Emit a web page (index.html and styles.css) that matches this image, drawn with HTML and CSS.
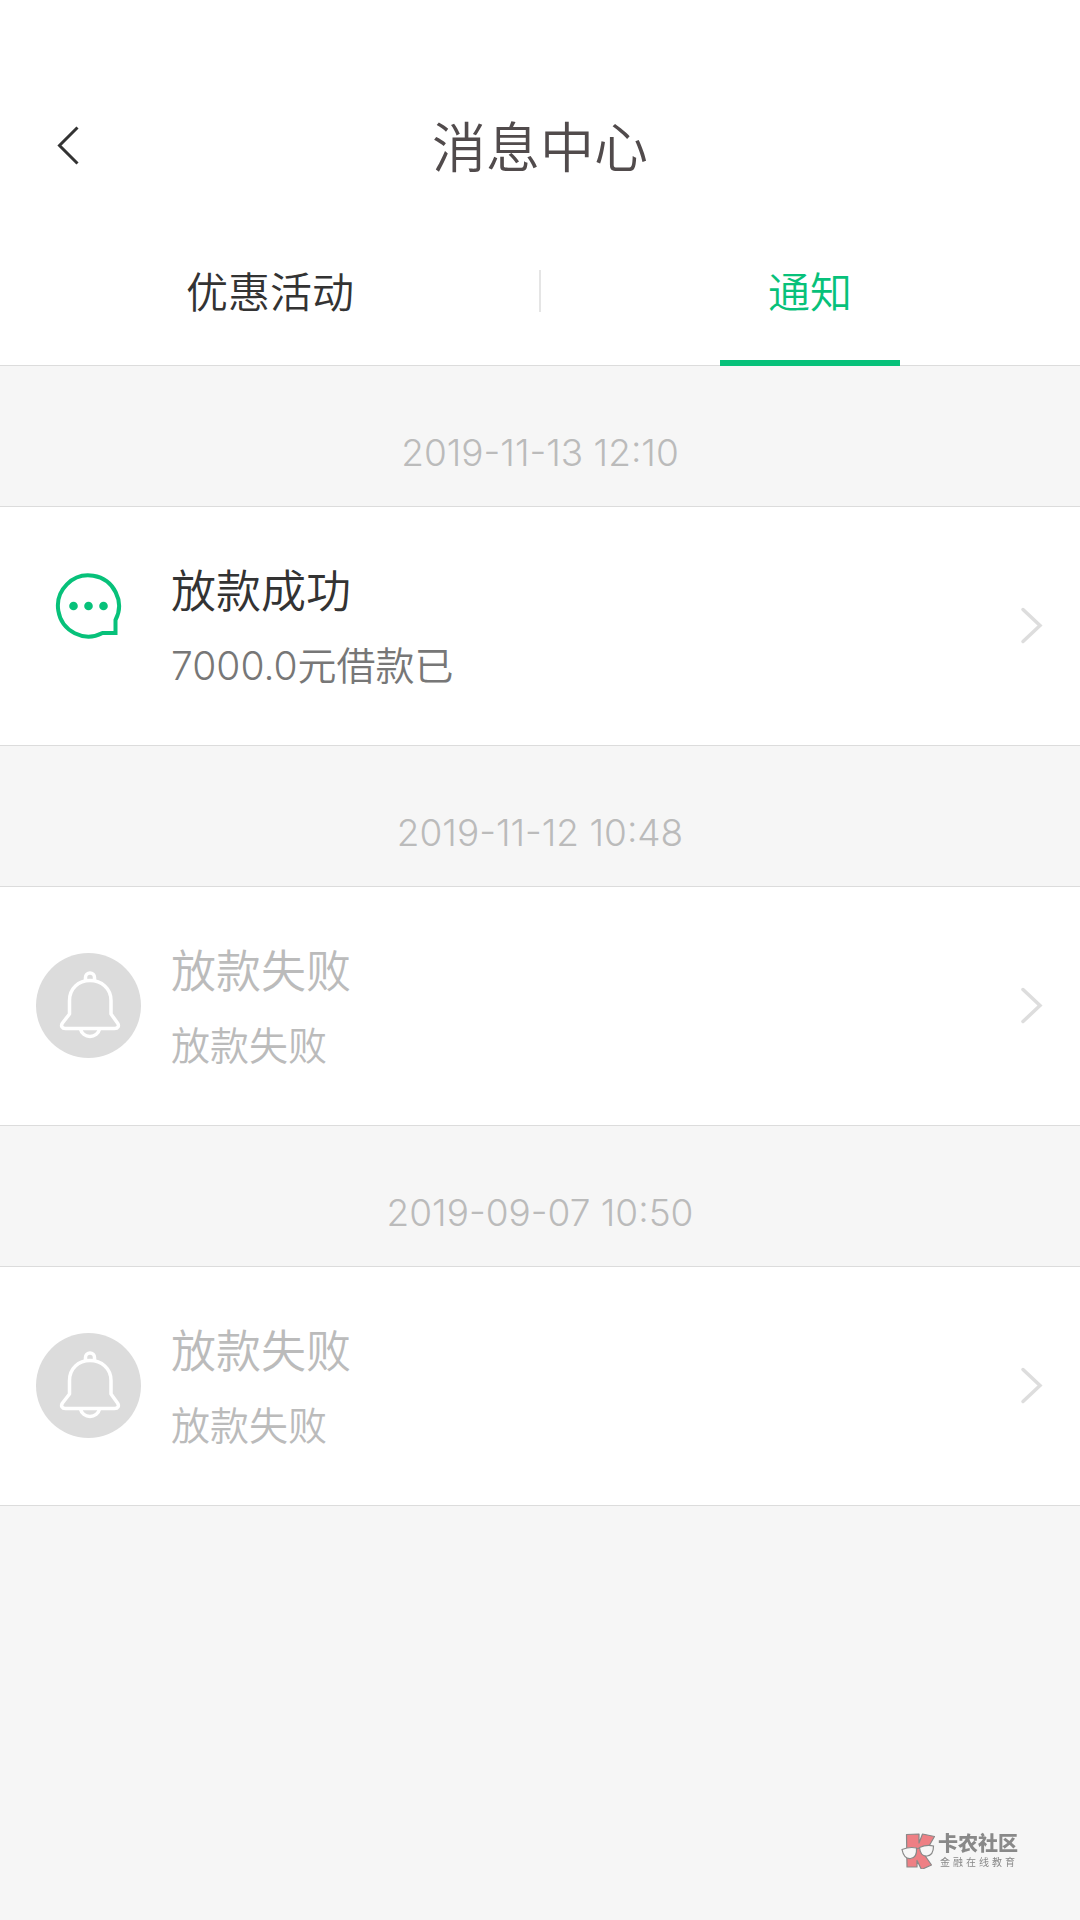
FILE: index.html
```html
<!DOCTYPE html>
<html lang="zh-CN">
<head>
<meta charset="utf-8">
<meta name="viewport" content="width=device-width, initial-scale=1">
<title>消息中心</title>
<link rel="stylesheet" href="styles.css">
</head>
<body>
<svg class="sprite" aria-hidden="true">
  <symbol id="chevron" viewBox="0 0 24 40"><path d="M3 4.500 20 20.500 3 36.500" fill="none" stroke="#ddd" stroke-width="3.500" stroke-linecap="round" stroke-linejoin="miter"/></symbol>
  <symbol id="bell" viewBox="0 0 105 105">
    <circle cx="52.5" cy="52.5" r="52.5" fill="#dcdcdc"/>
    <g fill="none" stroke="#fff" stroke-width="3.500" stroke-linejoin="round">
      <path d="M49.500 27v-2.500a4.500 4.500 0 0 1 9 0V27"/>
      <path d="M33.500 61V47.500C33.500 35.500 42.500 27.500 54 27.500s21 8 21 20V61l6.500 9c2 3 .5 5.500-3 5.500H29.500c-3.500 0-5-2.500-3-5.500z"/>
      <path d="M44.500 76c1 4.500 5 7.500 9.500 7.500s8.500-3 9.500-7.500"/>
    </g>
  </symbol>
  <symbol id="chat" viewBox="0 0 105 105">
    <path d="M66.500 60A30.500 30.500 0 1 1 79.500 47V60z" fill="none" stroke="#07c17a" stroke-width="4"/>
    <g fill="#07c17a"><circle cx="37.500" cy="33" r="4.300"/><circle cx="52.500" cy="33" r="4.300"/><circle cx="67.500" cy="33" r="4.300"/></g>
  </symbol>
</svg>

<header class="header">
  <button class="back" type="button" aria-label="返回">
    <svg class="back-icon" viewBox="0 0 24 40" aria-hidden="true"><path d="M21.500 1.500 3.500 19.500l18 18" fill="none" stroke="#333" stroke-width="3"/></svg>
  </button>
  <h1 class="title">消息中心</h1>
</header>

<nav class="tabs">
  <a class="tab" href="#offers">优惠活动</a>
  <a class="tab tab-active" href="#notices" aria-current="page">通知</a>
</nav>

<main class="list" id="notices">
  <section class="group">
    <time class="date" datetime="2019-11-13T12:10">2019-11-13 12:10</time>
    <a class="item" href="#notice-1">
      <svg class="icon" aria-hidden="true"><use href="#chat"/></svg>
      <div class="text">
        <h2 class="item-title">放款成功</h2>
        <p class="item-body"><span class="amount">7000.0</span>元借款已</p>
      </div>
      <svg class="chevron" aria-hidden="true"><use href="#chevron"/></svg>
    </a>
  </section>
  <section class="group">
    <time class="date" datetime="2019-11-12T10:48">2019-11-12 10:48</time>
    <a class="item item-read" href="#notice-2">
      <svg class="icon" aria-hidden="true"><use href="#bell"/></svg>
      <div class="text">
        <h2 class="item-title">放款失败</h2>
        <p class="item-body">放款失败</p>
      </div>
      <svg class="chevron" aria-hidden="true"><use href="#chevron"/></svg>
    </a>
  </section>
  <section class="group">
    <time class="date" datetime="2019-09-07T10:50">2019-09-07 10:50</time>
    <a class="item item-read" href="#notice-3">
      <svg class="icon" aria-hidden="true"><use href="#bell"/></svg>
      <div class="text">
        <h2 class="item-title">放款失败</h2>
        <p class="item-body">放款失败</p>
      </div>
      <svg class="chevron" aria-hidden="true"><use href="#chevron"/></svg>
    </a>
  </section>
</main>

<aside class="brand">
  <svg class="brand-logo" viewBox="0 0 34 36" aria-hidden="true">
    <path d="M5.500 1.500 18 1v9l3.500-9 12 2.500-7.500 13-3.500 4 8 11.500-10 4.500-4.500-9v6.500H6z" fill="#ee7f84" stroke="#898989" stroke-width="1.200" stroke-linejoin="round"/>
    <g fill="#f7f7f7" stroke="#898989" stroke-width="1.200">
      <path d="M1 16.500c5-2 10-2.500 14.500-1.500.5 6-1 10-6 10.500S2 21.500 1 16.500z"/>
      <path d="M18.500 14.500c4.500-2 9.500-2.500 14-1.500 0 6-1.500 9.500-6.500 10s-7-3.500-7.500-8.500z"/>
      <path d="m15.500 16 3-1"/>
    </g>
  </svg>
  <div>
    <p class="brand-name">卡农社区</p>
    <p class="brand-tag">金融在线教育</p>
  </div>
</aside>
</body>
</html>
```
FILE: styles.css
```css
* {
  box-sizing: border-box;
  margin: 0;
  padding: 0;
}

body {
  min-height: 100vh;
  background: #f6f6f6;
  color: #333;
  font-family: Inter, "Noto Sans CJK SC DemiLight", "Noto Sans CJK SC", sans-serif;
  font-weight: 350;
}

a {
  color: inherit;
  text-decoration: none;
}

.sprite {
  position: absolute;
  width: 0;
  height: 0;
}

.header {
  display: grid;
  grid-template-columns: 96px 1fr 96px;
  align-items: center;
  height: 220px;
  padding: 72px 20px 0;
  background: #fff;
}

.back {
  display: flex;
  align-items: center;
  justify-content: center;
  height: 96px;
  border: 0;
  background: none;
}

.back-icon {
  width: 24px;
  height: 40px;
}

.title {
  padding-top: 6px;
  color: #514b4c;
  font-size: 54px;
  font-weight: 350;
  line-height: 80px;
  text-align: center;
}

.tabs {
  display: grid;
  grid-template-columns: 1fr 1fr;
  height: 146px;
  border-bottom: 1px solid #dcdcdc;
  background: linear-gradient(#e5e5e5, #e5e5e5) center 50px / 2px 42px no-repeat #fff;
}

.tab {
  position: relative;
  padding-top: 43px;
  font-size: 42px;
  line-height: 60px;
  text-align: center;
}

.tab-active {
  color: #07c17a;
}

.tab-active::after {
  content: "";
  position: absolute;
  bottom: -1px;
  left: calc(50% - 90px);
  width: 180px;
  height: 6px;
  background: #07c17a;
}

.date {
  display: block;
  padding: 61px 0 27px;
  color: #bbb;
  font-size: 37px;
  font-weight: 300;
  line-height: 52px;
  text-align: center;
}

.item {
  display: flex;
  align-items: center;
  padding: 50px 36px 52px;
  border-top: 1px solid #dcdcdc;
  border-bottom: 1px solid #dcdcdc;
  background: #fff;
}

.icon {
  flex: none;
  width: 105px;
  height: 105px;
}

.text {
  flex: 1;
  padding: 0 30px;
}

.item-title {
  margin-bottom: 12px;
  font-size: 45px;
  font-weight: 350;
  line-height: 70px;
}

.item-body {
  color: #777;
  font-size: 39px;
  line-height: 54px;
}

.amount {
  font-weight: 300;
}

.item-read .item-title,
.item-read .item-body {
  color: #bbb;
}

.chevron {
  flex: none;
  width: 24px;
  height: 40px;
}

.brand {
  position: fixed;
  right: 62px;
  bottom: 51px;
  display: flex;
  align-items: center;
  gap: 3px;
  color: #898989;
  font-family: Inter, "Noto Sans CJK SC", sans-serif;
}

.brand-logo {
  width: 34px;
  height: 36px;
}

.brand-name {
  font-size: 20px;
  font-weight: 900;
  line-height: 22px;
}

.brand-tag {
  padding-left: 2px;
  font-size: 10px;
  font-weight: 400;
  letter-spacing: 3px;
  line-height: 14px;
}
```
